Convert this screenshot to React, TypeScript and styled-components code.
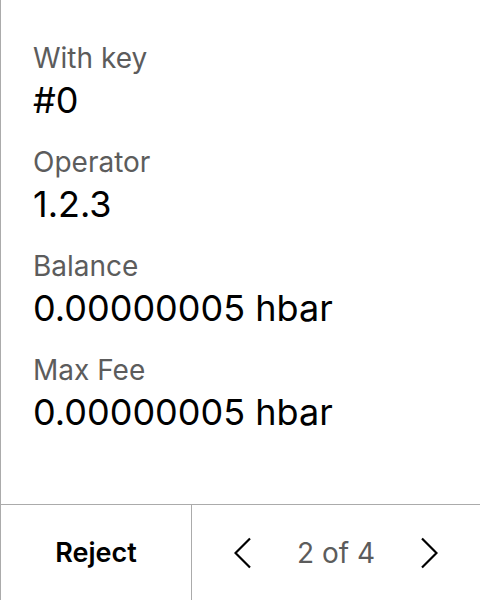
import React from "react";
import styled, { createGlobalStyle } from "styled-components";

const GlobalStyle = createGlobalStyle`
  html, body {
    margin: 0;
    padding: 0;
    background: #ffffff;
    font-family: Inter, "Noto Sans", sans-serif;
  }
  * { box-sizing: border-box; }
`;

const Screen = styled.div`
  display: flex;
  flex-direction: column;
  width: 480px;
  height: 600px;
  border-left: 1px solid #ababab;
  background: #ffffff;
`;

const Details = styled.div`
  flex: 1;
  display: flex;
  flex-direction: column;
  gap: 23px;
  padding: 41px 0 0 32px;
`;

const Field = styled.div`
  display: flex;
  flex-direction: column;
  gap: 3px;
`;

const Label = styled.div`
  font-size: 28px;
  line-height: 34px;
  color: #5c5c5c;
`;

const Value = styled.div`
  font-size: 36px;
  line-height: 44px;
  color: #000000;
`;

const Footer = styled.div`
  display: flex;
  height: 96px;
  border-top: 1px solid #ababab;
`;

const RejectButton = styled.button`
  width: 191px;
  border: none;
  border-right: 1px solid #ababab;
  background: transparent;
  font-family: Inter, "Noto Sans", sans-serif;
  font-size: 27px;
  font-weight: 600;
  color: #000000;
  padding: 0;
`;

const Pager = styled.div`
  flex: 1;
  display: flex;
  align-items: center;
  justify-content: center;
  gap: 45px;
`;

const PageText = styled.span`
  font-size: 28px;
  color: #5c5c5c;
`;

const Chevron = ({ dir }: { dir: "left" | "right" }) => (
  <svg width="18" height="32" viewBox="0 0 18 32" fill="none">
    <polyline
      points={dir === "left" ? "16,1.5 1.5,16 16,30.5" : "2,1.5 16.5,16 2,30.5"}
      stroke="#000"
      strokeWidth="2.2"
    />
  </svg>
);

const fields = [
  { label: "With key", value: "#0" },
  { label: "Operator", value: "1.2.3" },
  { label: "Balance", value: "0.00000005 hbar" },
  { label: "Max Fee", value: "0.00000005 hbar" },
];

export default function App() {
  return (
    <>
      <GlobalStyle />
      <Screen>
        <Details>
          {fields.map((f) => (
            <Field key={f.label}>
              <Label>{f.label}</Label>
              <Value>{f.value}</Value>
            </Field>
          ))}
        </Details>
        <Footer>
          <RejectButton>Reject</RejectButton>
          <Pager>
            <Chevron dir="left" />
            <PageText>2 of 4</PageText>
            <Chevron dir="right" />
          </Pager>
        </Footer>
      </Screen>
    </>
  );
}
